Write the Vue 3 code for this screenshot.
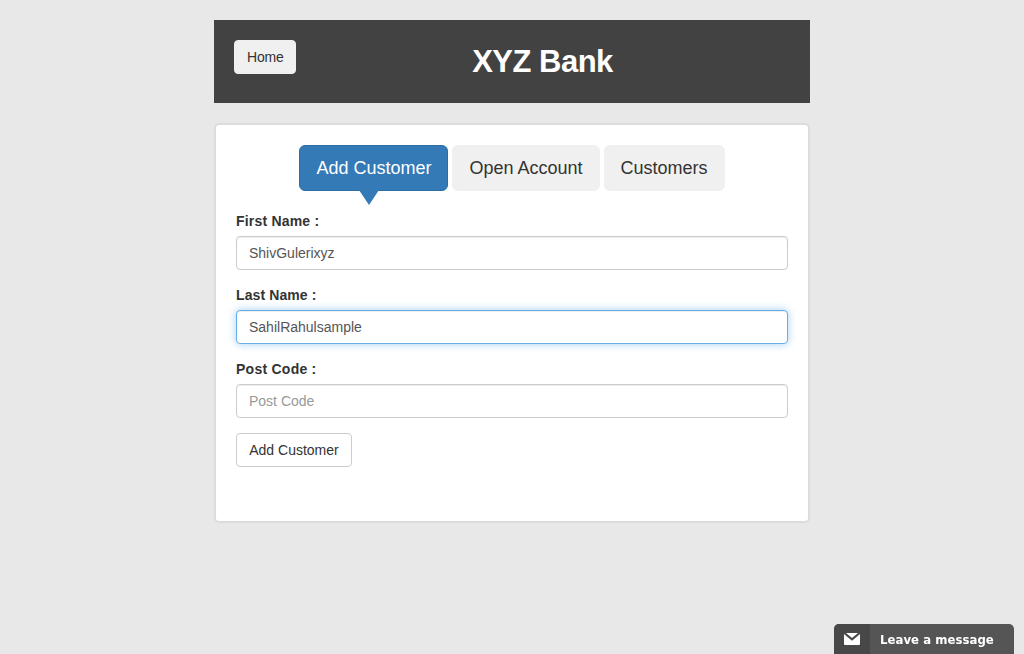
<script setup>
import { ref } from 'vue'

const tabs = ['Add Customer', 'Open Account', 'Customers']
const activeTab = ref('Add Customer')
const fields = ref([
  { id: 'first', label: 'First Name :', placeholder: 'First Name', value: 'ShivGulerixyz', focused: false },
  { id: 'last', label: 'Last Name :', placeholder: 'Last Name', value: 'SahilRahulsample', focused: true },
  { id: 'post', label: 'Post Code :', placeholder: 'Post Code', value: '', focused: false }
])
</script>

<template>
  <div class="page">
    <header class="bar">
      <button class="btn home">Home</button>
      <strong class="title">XYZ Bank</strong>
    </header>
    <main class="panel">
      <nav class="tabs">
        <button v-for="t in tabs" :key="t" class="tab" :class="{ active: t === activeTab }" @click="activeTab = t">{{ t }}</button>
      </nav>
      <form @submit.prevent>
        <div v-for="f in fields" :key="f.id" class="group">
          <label :class="f.id">{{ f.label }}</label>
          <input v-model="f.value" :class="{ focused: f.focused }" :placeholder="f.placeholder" spellcheck="false">
        </div>
        <button class="btn submit">Add Customer</button>
      </form>
    </main>
    <aside class="chat">
      <span class="chat-icon">
        <svg width="16" height="12" viewBox="0 0 16 12">
          <path d="M2 0h12L8 5z" fill="#fff" />
          <path d="M0 1L8 7.8 16 1v10a1 1 0 0 1-1 1H1a1 1 0 0 1-1-1z" fill="#fff" />
        </svg>
      </span>
      <span class="chat-text">Leave a message</span>
    </aside>
  </div>
</template>

<style>
body { background: #e8e8e8; }
</style>

<style scoped>
.page, .page * { box-sizing: border-box; }
.page {
  height: 654px;
  padding-top: 20px;
  overflow: hidden;
  font: 14px/20px "Liberation Sans", Arial, sans-serif;
  color: #333;
}
button, input { font-family: inherit; margin: 0; }
.bar {
  width: 596px;
  height: 83px;
  margin: 0 auto;
  padding: 20px;
  display: flex;
  align-items: flex-start;
  background: #424242;
}
.btn {
  height: 34px;
  padding: 6px 12px;
  border: 1px solid #ccc;
  border-radius: 4px;
  background: #fff;
  color: #333;
  font-size: 14px;
  line-height: 20px;
}
.home { width: 62px; background: #f0f0f0; border-color: #f0f0f0; letter-spacing: -.2px; }
.title {
  flex: 1;
  padding-right: 1px;
  text-align: center;
  color: #fff;
  font-size: 31px;
  letter-spacing: -.5px;
  line-height: 43px;
}
.panel {
  width: 596px;
  height: 400px;
  margin: 20px auto 0;
  padding: 20px;
  border: 2px solid #dcdcdc;
  border-radius: 5px;
  background: #fff;
}
.tabs { display: flex; justify-content: center; gap: 4px; height: 66px; }
.tab {
  position: relative;
  height: 46px;
  padding: 10px 16px;
  border: 1px solid #f0f0f0;
  border-radius: 6px;
  background: #f0f0f0;
  color: #333;
  font-size: 18px;
  line-height: 24px;
}
.tab.active { background: #337ab7; border-color: #2e6da4; color: #fff; }
.tab.active::after {
  content: "";
  position: absolute;
  top: 44px;
  left: 59px;
  border: 10px solid transparent;
  border-top: 15px solid #337ab7;
  border-bottom: 0;
}
.group { margin-bottom: 15px; }
label { display: block; margin-bottom: 5px; font-weight: bold; line-height: 20px; }
.first { letter-spacing: .2px; }
.last { letter-spacing: .1px; }
.post { letter-spacing: .25px; }
input {
  display: block;
  width: 100%;
  height: 34px;
  padding: 6px 12px;
  border: 1px solid #ccc;
  border-radius: 4px;
  background: #fff;
  color: #555;
  font-size: 14px;
  line-height: 20px;
  box-shadow: inset 0 1px 1px rgba(0, 0, 0, .075);
  outline: 0;
}
input::placeholder { color: #999; opacity: 1; }
input.focused {
  border-color: #66afe9;
  box-shadow: inset 0 1px 1px rgba(0, 0, 0, .075), 0 0 8px rgba(102, 175, 233, .6);
}
.submit { width: 116px; }
.chat {
  position: fixed;
  right: 10px;
  bottom: 0;
  width: 180px;
  height: 30px;
  display: flex;
  overflow: hidden;
  border-radius: 5px 5px 0 0;
  background: #555;
  color: #fff;
  font: bold 13px/31px "DejaVu Sans Condensed", "DejaVu Sans", sans-serif;
  font-stretch: condensed;
  letter-spacing: .05px;
}
.chat-icon { width: 36px; display: flex; align-items: center; justify-content: center; background: #484848; }
.chat-text { padding-left: 10px; white-space: nowrap; }
</style>
